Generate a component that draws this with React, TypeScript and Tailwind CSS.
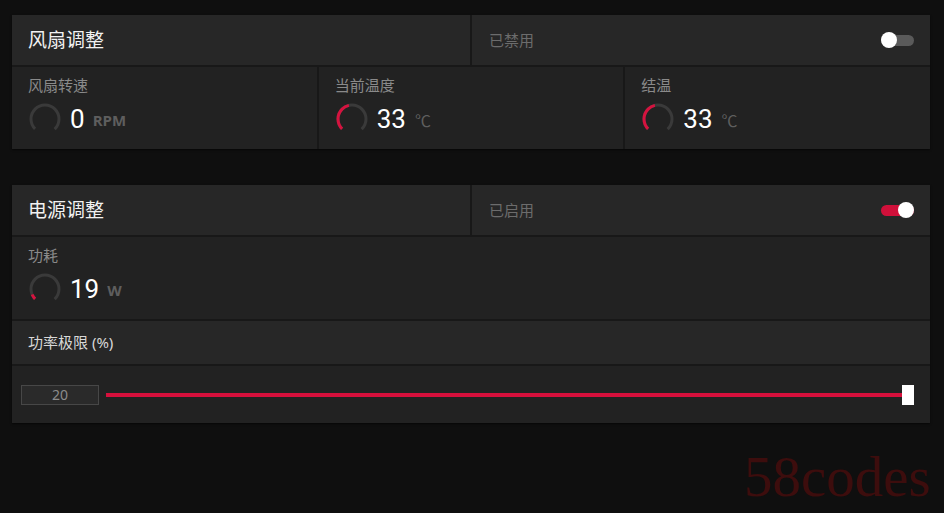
import React from 'react';

const ARC = 2 * Math.PI * 14;
const SWEEP = ARC * 0.75;

function Gauge({ frac }: { frac: number }) {
  return (
    <svg width="34" height="34" viewBox="0 0 34 34" className="shrink-0">
      <circle
        cx="17"
        cy="17"
        r="14"
        fill="none"
        stroke="#3a3a3a"
        strokeWidth="3"
        strokeDasharray={`${SWEEP} ${ARC}`}
        transform="rotate(135 17 17)"
      />
      {frac > 0 && (
        <circle
          cx="17"
          cy="17"
          r="14"
          fill="none"
          stroke="#d5133f"
          strokeWidth="3"
          strokeDasharray={`${SWEEP * frac} ${ARC}`}
          transform="rotate(135 17 17)"
        />
      )}
    </svg>
  );
}

function Toggle({ on }: { on: boolean }) {
  return (
    <div className="relative w-[33px] h-[16px] flex items-center">
      <div className={on ? 'w-full h-[11px] rounded-full bg-[#d0103a]' : 'w-full h-[11px] rounded-full bg-[#5a5a5a]'} />
      <div
        className={
          on
            ? 'absolute right-0 w-[16px] h-[16px] rounded-full bg-white'
            : 'absolute left-0 w-[16px] h-[16px] rounded-full bg-white'
        }
      />
    </div>
  );
}

function Header({ title, status, on }: { title: string; status: string; on: boolean }) {
  return (
    <div className="grid grid-cols-[458px_1fr] gap-[2px] h-[50px]">
      <div className="bg-[#272727] flex items-center pl-[16px] text-[19px] text-[#f2f2f2]">{title}</div>
      <div className="bg-[#272727] flex items-center justify-between pl-[17px] pr-[16px]">
        <span className="text-[15px] text-[#6c6c6c]">{status}</span>
        <Toggle on={on} />
      </div>
    </div>
  );
}

function Stat({ label, value, unit, frac, boldUnit }: { label: string; value: string; unit: string; frac: number; boldUnit?: boolean }) {
  return (
    <div className="bg-[#222222] h-[82px] pl-[16px] pt-[8px]">
      <div className="text-[15px] text-[#8a8a8a] leading-[20px]">{label}</div>
      <div className="flex items-center mt-[7px]">
        <Gauge frac={frac} />
        <span className="ml-[8px] text-[26px] text-white leading-none font-['Roboto',sans-serif]">{value}</span>
        <span
          className={
            boldUnit
              ? 'ml-[8px] mt-[3px] text-[15px] font-bold text-[#5e5e5e] font-["Open_Sans",sans-serif]'
              : 'ml-[9px] mt-[2px] text-[16px] text-[#5e5e5e] font-["Noto_Sans_CJK_SC",sans-serif]'
          }
        >
          {unit}
        </span>
      </div>
    </div>
  );
}

export default function App() {
  return (
    <div className="relative w-full h-[513px] bg-[#0f0f0f] overflow-hidden font-['Noto_Sans','Noto_Sans_CJK_SC',sans-serif]">
      <div className="ml-[12px] mt-[15px] w-[918px] flex flex-col gap-[2px] bg-[#181818] shadow-[0_1px_2px_rgba(0,0,0,0.6)]">
        <Header title="风扇调整" status="已禁用" on={false} />
        <div className="grid grid-cols-3 gap-[2px]">
          <Stat label="风扇转速" value="0" unit="RPM" frac={0} boldUnit />
          <Stat label="当前温度" value="33" unit="℃" frac={0.45} />
          <Stat label="结温" value="33" unit="℃" frac={0.45} />
        </div>
      </div>

      <div className="ml-[12px] mt-[36px] w-[918px] flex flex-col gap-[2px] bg-[#181818] shadow-[0_1px_2px_rgba(0,0,0,0.6)]">
        <Header title="电源调整" status="已启用" on={true} />
        <Stat label="功耗" value="19" unit="W" frac={0.08} boldUnit />
        <div className="bg-[#272727] h-[43px] flex items-center pl-[16px] text-[15px] text-[#d8d8d8]">功率极限 (%)</div>
        <div className="bg-[#222222] h-[57px] flex items-center pl-[9px] pr-[16px]">
          <div className="w-[78px] h-[20px] border border-[#474747] bg-[#2a2a2a] flex items-center justify-center text-[14px] text-[#8c8c8c] leading-none">
            20
          </div>
          <div className="relative flex-1 ml-[7px] h-[20px] flex items-center">
            <div className="w-full h-[4px] bg-[#d6103c]" />
            <div className="absolute right-0 w-[12px] h-[20px] bg-white" />
          </div>
        </div>
      </div>

      <div className="absolute left-[744px] top-[448px] text-[57px] leading-none text-[#3d0d0d] font-['Liberation_Serif',serif]">
        58codes
      </div>
    </div>
  );
}
